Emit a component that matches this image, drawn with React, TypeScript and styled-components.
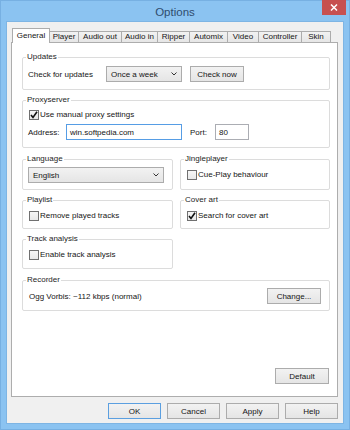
import React from 'react'
import styled, { createGlobalStyle } from 'styled-components'

const GlobalStyle = createGlobalStyle`
  html, body {
    margin: 0;
    padding: 0;
    background: #8bc3f1;
  }
  body {
    font-family: "Liberation Sans", Arial, sans-serif;
    font-size: 8px;
    color: #151515;
  }
`

const Window = styled.div`
  width: 350px;
  height: 430px;
  box-sizing: border-box;
  background: #8bc3f1;
  box-shadow: inset 0 0 0 1px #77b0e2;
  display: flex;
  flex-direction: column;
`

const TitleBar = styled.div`
  height: 22px;
  flex: none;
  display: grid;
  grid-template-columns: 1fr auto 1fr;
  align-items: start;
`

const Title = styled.div`
  grid-column: 2;
  font-size: 11.5px;
  line-height: 22px;
  padding-top: 1px;
  color: #2f4c6e;
`

const CloseButton = styled.div`
  grid-column: 3;
  justify-self: end;
  width: 24px;
  height: 15px;
  margin-right: 4px;
  background: #c75050;
  display: flex;
  align-items: center;
  justify-content: center;
`

const Client = styled.div`
  flex: 1;
  margin: 0 7px 7px;
  background: #f0f0f0;
  display: flex;
  flex-direction: column;
  padding: 6px 5px 4px 4px;
  box-shadow: 0 0 0 1px #7eb5e4;
`

const TabRow = styled.div`
  display: flex;
  align-items: flex-end;
  height: 14px;
  padding-left: 1px;
`

const Tab = styled.div<{ $w: number; $active?: boolean }>`
  box-sizing: border-box;
  width: ${p => p.$w}px;
  height: ${p => (p.$active ? 15 : 11)}px;
  margin-bottom: ${p => (p.$active ? -1 : 0)}px;
  border: 1px solid #acacac;
  border-bottom: none;
  background: ${p => (p.$active ? '#fff' : 'linear-gradient(#f2f2f2, #e6e6e6)')};
  position: relative;
  z-index: ${p => (p.$active ? 1 : 0)};
  display: flex;
  justify-content: center;
  padding-top: ${p => (p.$active ? 2 : 0)}px;
  line-height: 10px;
  & + & {
    margin-left: -1px;
  }
`

const Panel = styled.div`
  box-sizing: border-box;
  height: 355px;
  border: 1px solid #adadad;
  background: #fff;
  padding: 9px 7px 12px 10px;
  display: flex;
  flex-direction: column;
`

const Group = styled.fieldset<{ $pt?: number; $pb?: number; $pr?: number; $mt?: number }>`
  margin: ${p => p.$mt ?? 0}px 0 0;
  min-width: 0;
  border: 1px solid #dcdcdc;
  border-radius: 2px;
  padding: ${p => p.$pt ?? 4}px ${p => p.$pr ?? 5}px ${p => p.$pb ?? 6}px 5px;
`

const Legend = styled.legend`
  font-size: 8px;
  line-height: 10px;
  padding: 0 1px;
  margin-left: -2px;
  color: #1e1e1e;
`

const Pair = styled.div<{ $mt: number }>`
  display: grid;
  grid-template-columns: 151px 150px;
  column-gap: 7px;
  margin-top: ${p => p.$mt}px;
  & > fieldset {
    margin-top: 0;
  }
`

const Single = styled.div<{ $mt: number }>`
  width: 151px;
  margin-top: ${p => p.$mt}px;
  display: flex;
  flex-direction: column;
`

const Row = styled.div<{ $gap?: number; $mt?: number }>`
  display: flex;
  align-items: center;
  gap: ${p => p.$gap ?? 0}px;
  margin-top: ${p => p.$mt ?? 0}px;
`

const Label = styled.span<{ $w?: number }>`
  width: ${p => (p.$w ? `${p.$w}px` : 'auto')};
  flex: none;
  white-space: nowrap;
`

const Combo = styled.div<{ $w: number }>`
  box-sizing: border-box;
  width: ${p => p.$w}px;
  height: 16px;
  border: 1px solid #acacac;
  background: linear-gradient(#f2f2f2, #e5e5e5);
  display: flex;
  align-items: center;
  justify-content: space-between;
  padding: 0 4px 0 4px;
`

const Button = styled.div<{ $w?: number; $primary?: boolean }>`
  box-sizing: border-box;
  width: ${p => p.$w ?? 53}px;
  height: 16px;
  flex: none;
  border: 1px solid ${p => (p.$primary ? '#5b9fe0' : '#acacac')};
  background: linear-gradient(#f2f2f2, #e5e5e5);
  display: flex;
  align-items: center;
  justify-content: center;
`

const Field = styled.div<{ $w: number; $focused?: boolean }>`
  box-sizing: border-box;
  width: ${p => p.$w}px;
  height: 16px;
  flex: none;
  border: 1px solid ${p => (p.$focused ? '#569de5' : '#abadb3')};
  background: #fff;
  display: flex;
  align-items: center;
  padding: 0 3px;
`

const CheckRow = styled.label`
  display: flex;
  align-items: center;
  gap: 1px;
  height: 13px;
`

const Box = styled.span`
  box-sizing: border-box;
  width: 10px;
  height: 10px;
  margin-left: 1px;
  border: 1px solid #707070;
  background: linear-gradient(#f6f6f6, #e8e8e8);
  display: flex;
  align-items: center;
  justify-content: center;
`

const Recorder = styled.div`
  display: flex;
  align-items: center;
  justify-content: space-between;
  padding-left: 1px;
`

const DefaultRow = styled.div`
  margin-top: auto;
  display: flex;
  justify-content: flex-end;
  padding-right: 1px;
`

const ButtonRow = styled.div`
  display: flex;
  justify-content: flex-end;
  gap: 6px;
  margin-top: 6px;
`

const Chevron = () => (
  <svg width="6" height="4" viewBox="0 0 6 4">
    <polyline points="0.5,0.5 3,3 5.5,0.5" fill="none" stroke="#333" strokeWidth="1" />
  </svg>
)

const Check = ({ checked }: { checked?: boolean }) => (
  <Box>
    {checked && (
      <svg width="8" height="8" viewBox="0 0 8 8">
        <polyline points="1,4 3,6.5 7,0.8" fill="none" stroke="#111" strokeWidth="1.6" />
      </svg>
    )}
  </Box>
)

const tabs = [
  { name: 'General', w: 38 },
  { name: 'Player', w: 30 },
  { name: 'Audio out', w: 44 },
  { name: 'Audio in', w: 37 },
  { name: 'Ripper', w: 33 },
  { name: 'Automix', w: 39 },
  { name: 'Video', w: 32 },
  { name: 'Controller', w: 44 },
  { name: 'Skin', w: 30 },
]

export default function App() {
  return (
    <>
      <GlobalStyle />
      <Window>
        <TitleBar>
          <Title>Options</Title>
          <CloseButton>
            <svg width="8" height="7" viewBox="0 0 8 7">
              <path d="M1 0.5 L7 6.5 M7 0.5 L1 6.5" stroke="#fff" strokeWidth="1.5" />
            </svg>
          </CloseButton>
        </TitleBar>
        <Client>
          <TabRow>
            {tabs.map((t, i) => (
              <Tab key={t.name} $w={t.w} $active={i === 0}>
                {t.name}
              </Tab>
            ))}
          </TabRow>
          <Panel>
            <Group $pt={4} $pb={7}>
              <Legend>Updates</Legend>
              <Row>
                <Label $w={78}>Check for updates</Label>
                <Combo $w={76}>
                  <span>Once a week</span>
                  <Chevron />
                </Combo>
                <Button $w={54} style={{ marginLeft: 8 }}>Check now</Button>
              </Row>
            </Group>

            <Group $mt={5} $pt={3} $pb={7}>
              <Legend>Proxyserver</Legend>
              <CheckRow>
                <Check checked />
                <span>Use manual proxy settings</span>
              </CheckRow>
              <Row $mt={3}>
                <Label $w={38}>Address:</Label>
                <Field $w={116} $focused>win.softpedia.com</Field>
                <Label $w={25} style={{ marginLeft: 8 }}>Port:</Label>
                <Field $w={34}>80</Field>
              </Row>
            </Group>

            <Pair $mt={6}>
              <Group $pt={3} $pb={6}>
                <Legend>Language</Legend>
                <Combo $w={136}>
                  <span>English</span>
                  <Chevron />
                </Combo>
              </Group>
              <Group $pt={4} $pb={6}>
                <Legend>Jingleplayer</Legend>
                <CheckRow>
                  <Check />
                  <span>Cue-Play behaviour</span>
                </CheckRow>
              </Group>
            </Pair>

            <Pair $mt={5}>
              <Group $pt={4} $pb={6}>
                <Legend>Playlist</Legend>
                <CheckRow>
                  <Check />
                  <span>Remove played tracks</span>
                </CheckRow>
              </Group>
              <Group $pt={4} $pb={6}>
                <Legend>Cover art</Legend>
                <CheckRow>
                  <Check checked />
                  <span>Search for cover art</span>
                </CheckRow>
              </Group>
            </Pair>

            <Single $mt={5}>
              <Group $pt={4} $pb={7}>
                <Legend>Track analysis</Legend>
                <CheckRow>
                  <Check />
                  <span>Enable track analysis</span>
                </CheckRow>
              </Group>
            </Single>

            <Group $mt={6} $pt={3} $pb={6} $pr={8}>
              <Legend>Recorder</Legend>
              <Recorder>
                <span>Ogg Vorbis: ~112 kbps (normal)</span>
                <Button $w={54}>Change...</Button>
              </Recorder>
            </Group>

            <DefaultRow>
              <Button $w={54}>Default</Button>
            </DefaultRow>
          </Panel>
          <ButtonRow>
            <Button $primary>OK</Button>
            <Button>Cancel</Button>
            <Button>Apply</Button>
            <Button>Help</Button>
          </ButtonRow>
        </Client>
      </Window>
    </>
  )
}
